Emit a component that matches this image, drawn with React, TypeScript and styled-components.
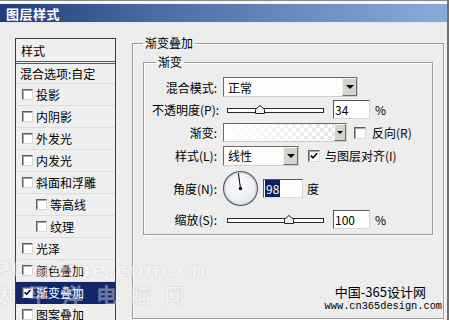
import styled, { createGlobalStyle } from "styled-components";

const GlobalStyle = createGlobalStyle`
  html, body {
    margin: 0;
    padding: 0;
  }
  body {
    width: 449px;
    height: 320px;
    overflow: hidden;
    background: #ededed;
    font-family: "Noto Sans CJK SC", "DejaVu Sans", sans-serif;
    font-size: 12px;
    color: #000;
  }
`;

const Window = styled.div`
  position: relative;
  width: 449px;
  height: 320px;
  box-sizing: border-box;
  border-top: 1px solid #8a8a8a;
  border-right: 2px solid #707070;
  background: #ededed;
  overflow: hidden;
`;

const TitleBar = styled.div`
  height: 18px;
  border-top: 3px solid #f6f6f6;
  border-bottom: 1px solid #e2e8f2;
  display: flex;
  align-items: center;
  padding-left: 6px;
  background: linear-gradient(to right, #213d7a, #4b6ca6 35%, #88acda);
  color: #fff;
  font-weight: bold;
  font-size: 13px;
  letter-spacing: 0.5px;
`;

const Content = styled.div`
  display: flex;
  align-items: flex-start;
  padding: 15px 0 0 15px;
`;

/* ---------- left style list ---------- */

const StyleList = styled.div`
  width: 101px;
  height: 300px;
  box-sizing: border-box;
  border: 1px solid #3c3c3c;
  border-bottom: none;
  background: #efefef;
  display: flex;
  flex-direction: column;
`;

const ListHeader = styled.div`
  height: 22px;
  display: flex;
  align-items: center;
  padding-left: 5px;
  border-bottom: 3px double #5a5a5a;
`;

const BlendRow = styled.div`
  height: 20px;
  box-sizing: border-box;
  display: flex;
  align-items: center;
  padding-left: 4px;
  border-bottom: 1px solid #dcdcdc;
`;

const ListItem = styled.div<{ $indent?: boolean; $selected?: boolean }>`
  height: 22px;
  box-sizing: border-box;
  flex-shrink: 0;
  display: flex;
  align-items: center;
  gap: 3px;
  padding-left: ${(p) => (p.$indent ? 20 : 6)}px;
  border-bottom: 1px solid ${(p) => (p.$selected ? "#14266a" : "#dedede")};
  background: ${(p) => (p.$selected ? "#14266a" : "transparent")};
  color: ${(p) => (p.$selected ? "#fff" : "#000")};
`;

const Box = styled.span<{ $size?: number }>`
  width: ${(p) => p.$size ?? 11}px;
  height: ${(p) => p.$size ?? 11}px;
  box-sizing: border-box;
  flex-shrink: 0;
  display: inline-flex;
  align-items: center;
  justify-content: center;
  background: #fff;
  border: 1px solid;
  border-color: #5e5e5e #d8d8d8 #d8d8d8 #5e5e5e;
  box-shadow: inset 1px 1px 0 #a8a8a8;
`;

/* ---------- right panel ---------- */

const RightPanel = styled.div`
  margin-left: 16px;
  margin-top: -2px;
`;

const OuterGroup = styled.fieldset`
  width: 312px;
  height: 283px;
  box-sizing: border-box;
  margin: 0;
  padding: 5px 10px 0 10px;
  border: 1px solid #9a9a9a;
  box-shadow: inset 1px 1px 0 #fff, 1px 1px 0 #fff;
`;

const InnerGroup = styled.fieldset`
  width: 290px;
  height: 180px;
  box-sizing: border-box;
  margin: 0;
  padding: 7px 0 0 8px;
  border: 1px solid #9a9a9a;
  box-shadow: inset 1px 1px 0 #fff, 1px 1px 0 #fff;
`;

const Legend = styled.legend<{ $offset?: number }>`
  padding: 0 2px;
  margin-left: ${(p) => p.$offset ?? 0}px;
  line-height: 14px;
`;

const Row = styled.div<{ $h: number; $top?: number }>`
  height: ${(p) => p.$h}px;
  margin-top: ${(p) => p.$top ?? 0}px;
  display: flex;
  align-items: center;
`;

const Label = styled.span`
  width: 65px;
  margin-right: 6px;
  text-align: right;
  white-space: nowrap;
`;

const Select = styled.div<{ $w: number }>`
  width: ${(p) => p.$w}px;
  height: 20px;
  box-sizing: border-box;
  display: flex;
  align-items: stretch;
  background: #fdfdfb;
  border: 1px solid;
  border-color: #6a6a6a #cfcfcf #cfcfcf #6a6a6a;
`;

const SelectText = styled.span`
  flex: 1;
  display: flex;
  align-items: center;
  padding-left: 4px;
`;

const DropButton = styled.span<{ $w?: number }>`
  width: ${(p) => p.$w ?? 15}px;
  box-sizing: border-box;
  display: flex;
  align-items: center;
  justify-content: center;
  background: #d6d3cc;
  border: 1px solid;
  border-color: #f4f4f4 #6c6c6c #6c6c6c #f4f4f4;
`;

const Arrow = styled.span<{ $s?: number }>`
  width: 0;
  height: 0;
  border-left: ${(p) => p.$s ?? 4}px solid transparent;
  border-right: ${(p) => p.$s ?? 4}px solid transparent;
  border-top: ${(p) => p.$s ?? 4}px solid #000;
`;

const SliderTrack = styled.div`
  position: relative;
  width: 97px;
  height: 5px;
  box-sizing: border-box;
  margin-left: 4px;
  background: #fff;
  border: 1px solid #2a2a2a;
  margin-top: 2px;
`;

const Thumb = styled.svg`
  position: absolute;
  top: -4px;
  margin-left: -5px;
`;

const NumberInput = styled.div<{ $w: number; $left: number }>`
  width: ${(p) => p.$w}px;
  height: 19px;
  box-sizing: border-box;
  margin-left: ${(p) => p.$left}px;
  display: flex;
  align-items: center;
  padding-left: 1px;
  background: #fff;
  border: 1px solid;
  border-color: #555 #d8d8d8 #d8d8d8 #555;
  font-size: 12px;
`;

const Unit = styled.span<{ $left: number }>`
  margin-left: ${(p) => p.$left}px;
`;

const Highlight = styled.span`
  background: #0e1f5e;
  color: #fff;
  padding: 0 1px;
`;

const GradientPicker = styled.div`
  width: 124px;
  height: 19px;
  box-sizing: border-box;
  display: flex;
  border: 1px solid;
  border-color: #6a6a6a #cfcfcf #cfcfcf #6a6a6a;
`;

const GradientSwatch = styled.div`
  flex: 1;
  background:
    linear-gradient(to right, rgba(255, 255, 255, 1), rgba(255, 255, 255, 0.4)),
    repeating-conic-gradient(#d4d4d4 0% 25%, #ffffff 0% 50%) 0 0 / 8px 8px;
`;

const CheckWrap = styled.span<{ $left: number }>`
  margin-left: ${(p) => p.$left}px;
  display: inline-flex;
`;

const CheckText = styled.span<{ $left: number }>`
  margin-left: ${(p) => p.$left}px;
  white-space: nowrap;
`;

const Dial = styled.svg`
  margin-left: -1px;
  flex-shrink: 0;
`;

const Watermark = styled.div`
  position: absolute;
  left: 322px;
  top: 283px;
  display: flex;
  flex-direction: column;
  align-items: flex-end;
  width: 120px;
`;

const SiteName = styled.span`
  font-size: 13px;
  line-height: 16px;
  margin-right: 16px;
`;

const SiteUrl = styled.span`
  font-family: "Liberation Mono", monospace;
  font-size: 10.3px;
  line-height: 12px;
  white-space: nowrap;
`;

const FaintMark = styled.div`
  position: absolute;
  left: -6px;
  top: 257px;
  display: flex;
  flex-direction: column;
  color: rgba(255, 255, 255, 0.4);
  -webkit-text-stroke: 0.5px rgba(120, 120, 120, 0.25);
  font-family: "DejaVu Sans", sans-serif;
  font-weight: bold;
  pointer-events: none;
`;

const FaintLatin = styled.span`
  font-size: 22px;
  line-height: 24px;
  letter-spacing: 0.5px;
`;

const FaintCjk = styled.span`
  font-family: "Noto Sans CJK SC", sans-serif;
  font-size: 21px;
  line-height: 24px;
  letter-spacing: 13px;
`;

function Check({ checked }: { checked?: boolean }) {
  return (
    <Box $size={12}>
      {checked && (
        <svg width="8" height="8" viewBox="0 0 8 8">
          <path d="M0.8 3.6 L3 5.8 L7.2 1.2" fill="none" stroke="#000" strokeWidth="1.6" />
        </svg>
      )}
    </Box>
  );
}

function Slider({ value, min, max }: { value: number; min: number; max: number }) {
  const pct = ((value - min) / (max - min)) * 100;
  return (
    <SliderTrack>
      <Thumb width="10" height="9" viewBox="0 0 10 9" style={{ left: `${pct}%` }}>
        <path d="M5 0.5 L9.5 4.5 L9.5 8.5 L0.5 8.5 L0.5 4.5 Z" fill="#f2f2f2" stroke="#222" strokeWidth="1" />
      </Thumb>
    </SliderTrack>
  );
}

function AngleDial({ angle }: { angle: number }) {
  const r = (angle * Math.PI) / 180;
  const x = 18 + Math.cos(r) * 15;
  const y = 18 - Math.sin(r) * 15;
  return (
    <Dial width="37" height="37" viewBox="0 0 36 36">
      <defs>
        <radialGradient id="dialFill" cx="45%" cy="40%" r="60%">
          <stop offset="0%" stopColor="#ffffff" />
          <stop offset="100%" stopColor="#e6e8ee" />
        </radialGradient>
      </defs>
      <circle cx="18" cy="18" r="16.5" fill="url(#dialFill)" stroke="#56606c" strokeWidth="1.2" />
      <circle cx="18" cy="18" r="15.4" fill="none" stroke="#c3c8d0" strokeWidth="0.8" />
      <line x1="18" y1="18" x2={x} y2={y} stroke="#000" strokeWidth="1" />
      <circle cx="18" cy="18" r="1.6" fill="#000" />
    </Dial>
  );
}

const items: { name: string; indent?: boolean; checked?: boolean; selected?: boolean }[] = [
  { name: "投影" },
  { name: "内阴影" },
  { name: "外发光" },
  { name: "内发光" },
  { name: "斜面和浮雕" },
  { name: "等高线", indent: true },
  { name: "纹理", indent: true },
  { name: "光泽" },
  { name: "颜色叠加" },
  { name: "渐变叠加", checked: true, selected: true },
  { name: "图案叠加" },
];

function ListBox({ checked }: { checked?: boolean }) {
  return (
    <Box>
      {checked && (
        <svg width="7" height="7" viewBox="0 0 7 7">
          <path d="M0.6 3.2 L2.6 5.2 L6.4 1" fill="none" stroke="#000" strokeWidth="1.5" />
        </svg>
      )}
    </Box>
  );
}

export default function App() {
  return (
    <>
      <GlobalStyle />
      <Window>
        <TitleBar>图层样式</TitleBar>
        <Content>
          <StyleList>
            <ListHeader>样式</ListHeader>
            <BlendRow>混合选项:自定</BlendRow>
            {items.map((it) => (
              <ListItem key={it.name} $indent={it.indent} $selected={it.selected}>
                <ListBox checked={it.checked} />
                {it.name}
              </ListItem>
            ))}
          </StyleList>

          <RightPanel>
            <OuterGroup>
              <Legend>渐变叠加</Legend>
              <InnerGroup>
                <Legend $offset={4}>渐变</Legend>

                <Row $h={22}>
                  <Label>混合模式:</Label>
                  <Select $w={135}>
                    <SelectText>正常</SelectText>
                    <DropButton>
                      <Arrow />
                    </DropButton>
                  </Select>
                </Row>

                <Row $h={22}>
                  <Label>不透明度(P):</Label>
                  <Slider value={34} min={0} max={100} />
                  <NumberInput $w={37} $left={9}>34</NumberInput>
                  <Unit $left={5}>%</Unit>
                </Row>

                <Row $h={23} $top={1}>
                  <Label>渐变:</Label>
                  <GradientPicker>
                    <GradientSwatch />
                    <DropButton $w={12}>
                      <Arrow $s={3} />
                    </DropButton>
                  </GradientPicker>
                  <CheckWrap $left={7}>
                    <Check />
                  </CheckWrap>
                  <CheckText $left={6}>反向(R)</CheckText>
                </Row>

                <Row $h={23}>
                  <Label>样式(L):</Label>
                  <Select $w={76}>
                    <SelectText>线性</SelectText>
                    <DropButton>
                      <Arrow />
                    </DropButton>
                  </Select>
                  <CheckWrap $left={9}>
                    <Check checked />
                  </CheckWrap>
                  <CheckText $left={5}>与图层对齐(I)</CheckText>
                </Row>

                <Row $h={42}>
                  <Label>角度(N):</Label>
                  <AngleDial angle={98} />
                  <NumberInput $w={40} $left={4}>
                    <Highlight>98</Highlight>
                  </NumberInput>
                  <Unit $left={4}>度</Unit>
                </Row>

                <Row $h={20}>
                  <Label>缩放(S):</Label>
                  <Slider value={100} min={10} max={150} />
                  <NumberInput $w={37} $left={9}>100</NumberInput>
                  <Unit $left={5}>%</Unit>
                </Row>
              </InnerGroup>
            </OuterGroup>
          </RightPanel>
        </Content>

        <FaintMark>
          <FaintLatin>PConline.com.cn</FaintLatin>
          <FaintCjk>太平洋电脑网</FaintCjk>
        </FaintMark>

        <Watermark>
          <SiteName>中国-365设计网</SiteName>
          <SiteUrl>www.cn365design.com</SiteUrl>
        </Watermark>
      </Window>
    </>
  );
}
